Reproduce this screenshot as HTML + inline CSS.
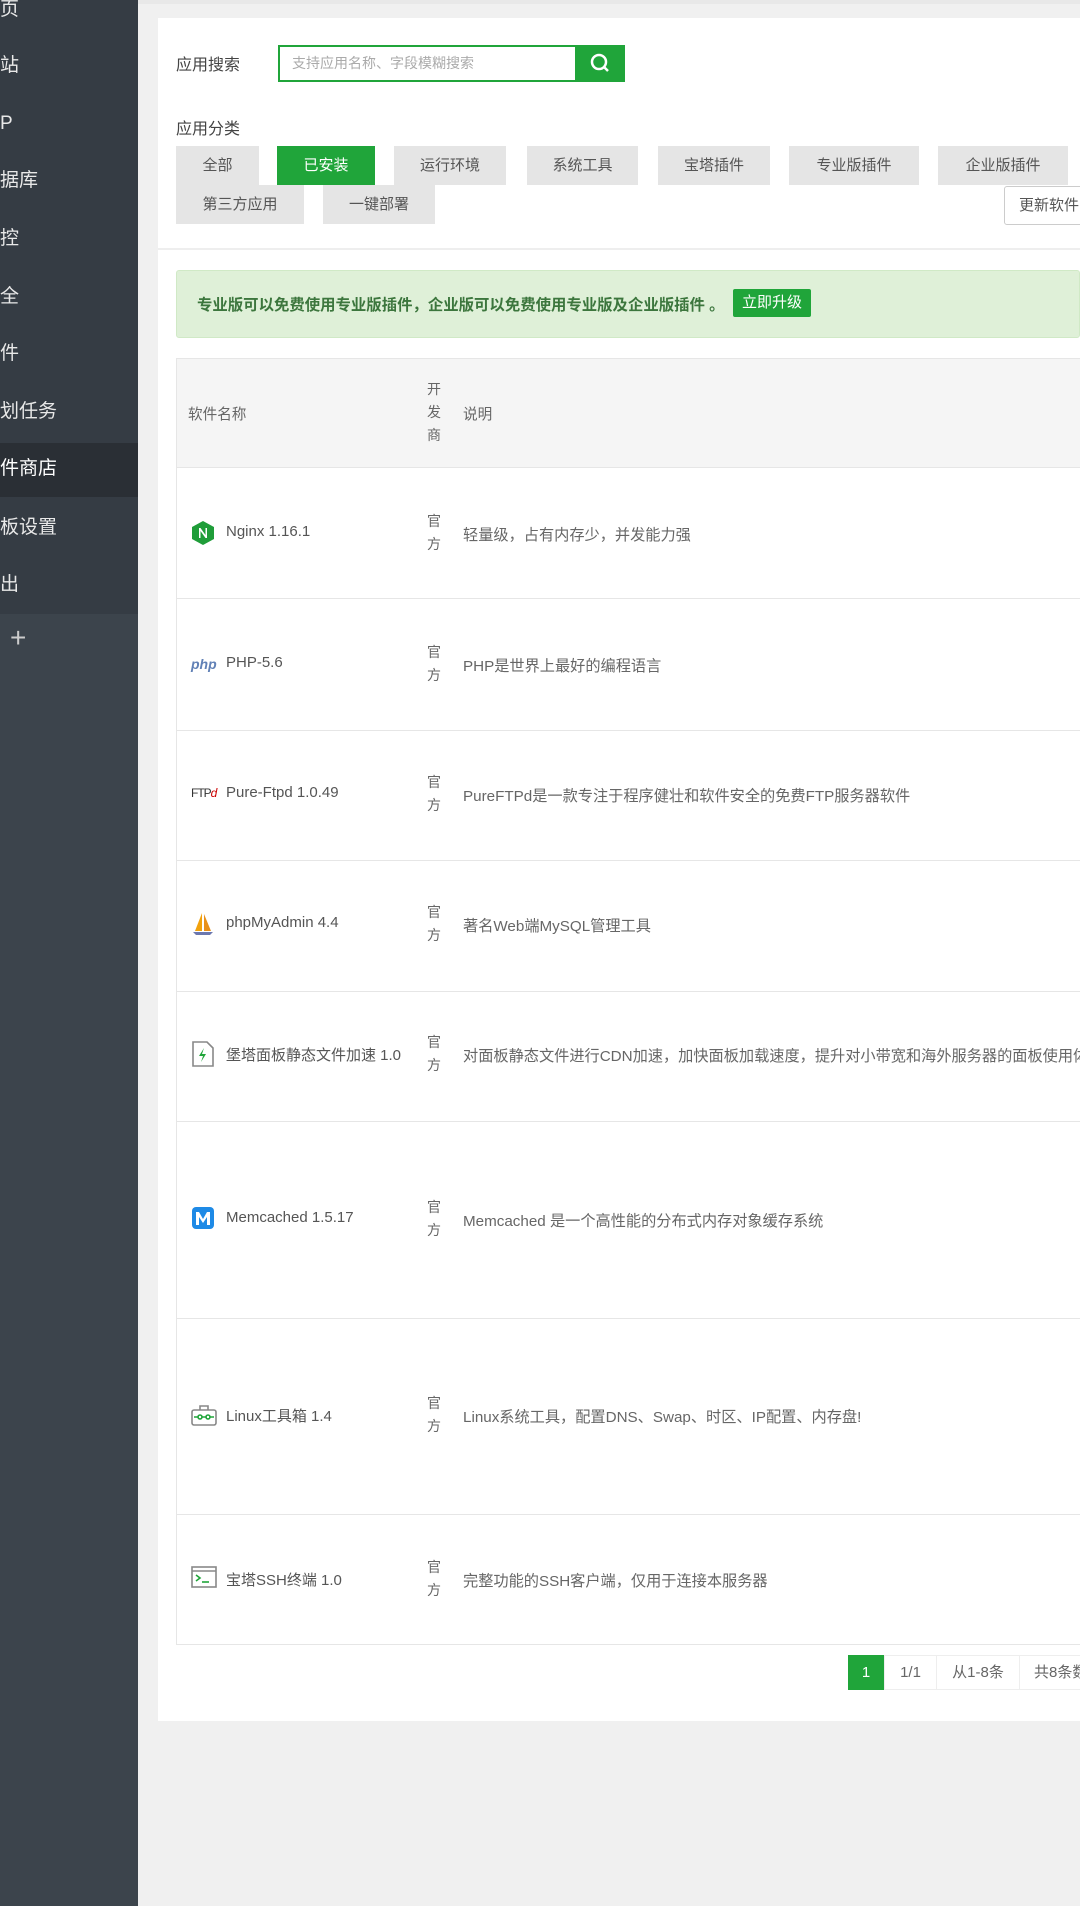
<!DOCTYPE html>
<html><head><meta charset="utf-8"><style>
*{margin:0;padding:0;box-sizing:border-box}
body{width:1080px;height:1906px;background:#f0f0f0;font-family:"Liberation Sans","Noto Sans CJK SC",sans-serif;color:#666;font-size:15px;position:relative;overflow:hidden}
.a{position:absolute}
#side{left:0;top:0;width:138px;height:1906px;background:#3c444c}
#side .top{left:0;top:0;width:138px;height:614px;background:#353c44}
#side .act{left:0;top:443px;width:138px;height:54px;background:#2a2f35}
.mi{position:absolute;left:0;color:#e8e8e8;font-size:19px;line-height:24px;white-space:nowrap}
.mi.w{color:#fff}
#panel{left:158px;top:18px;width:922px;height:1703px;background:#fff}
.btn{position:absolute;height:39px;line-height:39px;text-align:center;background:#e5e5e5;color:#555;font-size:15px}
.row{position:absolute;left:176px;width:904px;border-top:1px solid #e6e6e6}
.nm{position:absolute;left:226px;font-size:15px;color:#555;white-space:nowrap}
.dev{position:absolute;left:427px;font-size:14px;line-height:23px;color:#666;width:16px}
.ds{position:absolute;left:463px;font-size:15.2px;color:#666;white-space:nowrap}
.ic{position:absolute;left:191px}
</style></head><body>
<div id="side" class="a">
<div class="a top"></div>
<div class="a act"></div>
<div class="mi" style="top:-2px">页</div>
<div class="mi" style="top:54px">站</div>
<div class="mi" style="top:112px">P</div>
<div class="mi" style="top:169px">据库</div>
<div class="mi" style="top:227px">控</div>
<div class="mi" style="top:285px">全</div>
<div class="mi" style="top:342px">件</div>
<div class="mi" style="top:400px">划任务</div>
<div class="mi w" style="top:457px">件商店</div>
<div class="mi" style="top:516px">板设置</div>
<div class="mi" style="top:573px">出</div>
<div class="mi" style="top:626px;left:10px;font-size:28px;color:#ccc">+</div>
</div>
<div class="a" style="left:138px;top:0;width:942px;height:4px;background:#e8e8e8"></div>
<div id="panel" class="a"></div>
<div class="a" style="left:176px;top:51px;font-size:16px;color:#444">应用搜索</div>
<div class="a" style="left:278px;top:45px;width:298px;height:37px;border:2px solid #20a53a;border-right:none;background:#fff;font-size:14px;color:#aaa;padding-left:12px;line-height:33px">支持应用名称、字段模糊搜索</div>
<div class="a" style="left:575px;top:45px;width:50px;height:37px;background:#20a53a">
<svg width="50" height="37" viewBox="0 0 50 37"><circle cx="24" cy="17" r="7" fill="none" stroke="#fff" stroke-width="2.5"/><line x1="29" y1="22" x2="33" y2="26" stroke="#fff" stroke-width="2.5"/></svg></div>
<div class="a" style="left:176px;top:115px;font-size:16px;color:#444">应用分类</div>
<div class="btn" style="left:176px;top:146px;width:83px">全部</div>
<div class="btn" style="left:277px;top:146px;width:98px;background:#20a53a;color:#fff">已安装</div>
<div class="btn" style="left:394px;top:146px;width:112px">运行环境</div>
<div class="btn" style="left:527px;top:146px;width:111px">系统工具</div>
<div class="btn" style="left:658px;top:146px;width:112px">宝塔插件</div>
<div class="btn" style="left:789px;top:146px;width:130px">专业版插件</div>
<div class="btn" style="left:938px;top:146px;width:130px">企业版插件</div>
<div class="btn" style="left:176px;top:185px;width:128px">第三方应用</div>
<div class="btn" style="left:323px;top:185px;width:112px">一键部署</div>
<div class="a" style="left:1004px;top:186px;width:90px;height:39px;border:1px solid #ccc;border-radius:3px;background:#fff;line-height:37px;padding-left:14px;font-size:15px;color:#555;white-space:nowrap">更新软件</div>
<div class="a" style="left:158px;top:248px;width:922px;height:2px;background:#eee"></div>
<div class="a" style="left:176px;top:270px;width:904px;height:68px;background:#dff0d8;border:1px solid #d0e9c6;border-radius:3px"></div>
<div class="a" style="left:197px;top:293px;font-size:15.4px;font-weight:bold;color:#3c763d;white-space:nowrap">专业版可以免费使用专业版插件，企业版可以免费使用专业版及企业版插件 。</div>
<div class="a" style="left:733px;top:289px;width:78px;height:28px;background:#20a53a;border-radius:2px;color:#fff;font-size:15px;line-height:28px;text-align:center">立即升级</div>
<div class="a" style="left:176px;top:358px;width:904px;height:1287px;border:1px solid #e6e6e6;border-right:none"></div>
<div class="a" style="left:177px;top:359px;width:903px;height:109px;background:#f5f5f5;border-bottom:1px solid #e6e6e6"></div>
<div class="a" style="left:188px;top:403px;font-size:14.6px;color:#666">软件名称</div>
<div class="dev" style="top:378px">开发商</div>
<div class="a" style="left:463px;top:403px;font-size:14.6px;color:#666">说明</div>

<div class="row" style="top:598px"></div><div class="row" style="top:730px"></div><div class="row" style="top:860px"></div><div class="row" style="top:991px"></div><div class="row" style="top:1121px"></div><div class="row" style="top:1318px"></div><div class="row" style="top:1514px"></div>

<svg class="ic" style="top:520px" width="24" height="26" viewBox="0 0 24 26"><polygon points="12,1 23,7 23,19 12,25 1,19 1,7" fill="#1f9d39"/><path d="M8 18V8h1.5l5 7V8H16v10h-1.5l-5-7v7z" fill="#fff"/></svg>
<div class="nm" style="top:523px">Nginx 1.16.1</div>
<div class="dev" style="top:510px">官方</div>
<div class="ds" style="top:523px">轻量级，占有内存少，并发能力强</div>

<div class="ic" style="top:656px;font-size:14px;font-style:italic;font-weight:bold;color:#6181b6">php</div>
<div class="nm" style="top:654px">PHP-5.6</div>
<div class="dev" style="top:641px">官方</div>
<div class="ds" style="top:654px">PHP是世界上最好的编程语言</div>

<div class="ic" style="top:786px;font-size:12px;color:#333;letter-spacing:-1px">FTP<span style="color:#c00;font-style:italic">d</span></div>
<div class="nm" style="top:784px">Pure-Ftpd 1.0.49</div>
<div class="dev" style="top:771px">官方</div>
<div class="ds" style="top:784px">PureFTPd是一款专注于程序健壮和软件安全的免费FTP服务器软件</div>

<svg class="ic" style="top:911px" width="24" height="26" viewBox="0 0 24 26"><path d="M11 2L4 20h7z" fill="#f2a20c"/><path d="M13 3l7 17h-7z" fill="#e8901a"/><path d="M2 21h20l-3 3H5z" fill="#6c78af"/></svg>
<div class="nm" style="top:914px">phpMyAdmin 4.4</div>
<div class="dev" style="top:901px">官方</div>
<div class="ds" style="top:914px">著名Web端MySQL管理工具</div>

<svg class="ic" style="top:1040px" width="24" height="28" viewBox="0 0 24 28"><path d="M2 2h14l6 6v18H2z" fill="#fff" stroke="#888" stroke-width="1.6"/><path d="M13 8l-5 8h4l-2 6 5-8h-4z" fill="#20a53a"/></svg>
<div class="nm" style="top:1044px">堡塔面板静态文件加速 1.0</div>
<div class="dev" style="top:1031px">官方</div>
<div class="ds" style="top:1044px">对面板静态文件进行CDN加速，加快面板加载速度，提升对小带宽和海外服务器的面板使用体验</div>

<svg class="ic" style="top:1206px" width="24" height="24" viewBox="0 0 24 24"><rect x="1" y="1" width="22" height="22" rx="4" fill="#1e8ae6"/><path d="M5 19V6h3l4 7 4-7h3v13h-3V11l-4 6-4-6v8z" fill="#fff"/></svg>
<div class="nm" style="top:1209px">Memcached 1.5.17</div>
<div class="dev" style="top:1196px">官方</div>
<div class="ds" style="top:1209px">Memcached 是一个高性能的分布式内存对象缓存系统</div>

<svg class="ic" style="top:1404px" width="26" height="22" viewBox="0 0 26 22"><rect x="1" y="6" width="24" height="15" rx="2" fill="none" stroke="#888" stroke-width="1.6"/><path d="M9 6V2h8v4" fill="none" stroke="#888" stroke-width="1.6"/><line x1="3" y1="13" x2="23" y2="13" stroke="#20a53a" stroke-width="1.6"/><circle cx="9" cy="13" r="2" fill="#fff" stroke="#20a53a" stroke-width="1.6"/><circle cx="17" cy="13" r="2" fill="#fff" stroke="#20a53a" stroke-width="1.6"/></svg>
<div class="nm" style="top:1405px">Linux工具箱 1.4</div>
<div class="dev" style="top:1392px">官方</div>
<div class="ds" style="top:1405px">Linux系统工具，配置DNS、Swap、时区、IP配置、内存盘!</div>

<svg class="ic" style="top:1566px" width="26" height="22" viewBox="0 0 26 22"><rect x="1" y="1" width="24" height="20" fill="none" stroke="#888" stroke-width="1.6"/><line x1="1" y1="5" x2="25" y2="5" stroke="#888" stroke-width="1.4"/><path d="M5 9l4 3-4 3" fill="none" stroke="#20a53a" stroke-width="1.6"/><line x1="11" y1="16" x2="18" y2="16" stroke="#20a53a" stroke-width="1.6"/></svg>
<div class="nm" style="top:1569px">宝塔SSH终端 1.0</div>
<div class="dev" style="top:1556px">官方</div>
<div class="ds" style="top:1569px">完整功能的SSH客户端，仅用于连接本服务器</div>

<div class="a" style="left:848px;top:1655px;width:36px;height:35px;background:#20a53a;color:#fff;text-align:center;line-height:35px;font-size:15px">1</div>
<div class="a" style="left:884px;top:1655px;width:53px;height:35px;border:1px solid #eee;text-align:center;line-height:33px;font-size:15px">1/1</div>
<div class="a" style="left:936px;top:1655px;width:84px;height:35px;border:1px solid #eee;text-align:center;line-height:33px;font-size:15px">从1-8条</div>
<div class="a" style="left:1019px;top:1655px;width:80px;height:35px;border:1px solid #eee;line-height:33px;padding-left:14px;font-size:15px;white-space:nowrap">共8条数据</div>
</body></html>
